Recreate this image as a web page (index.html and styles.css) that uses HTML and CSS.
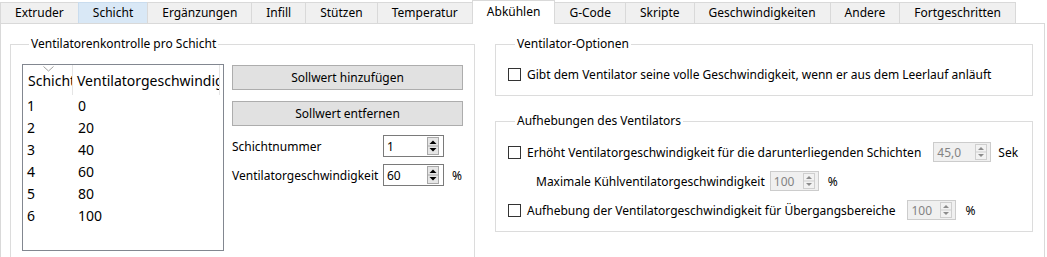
FILE: index.html
```html
<!DOCTYPE html>
<html lang="de">
<head>
<meta charset="utf-8">
<title>Abkühlen</title>
<link rel="stylesheet" href="styles.css">
</head>
<body>
<div class="window">
  <div class="tabbar">
    <div class="tab">Extruder</div>
    <div class="tab hover">Schicht</div>
    <div class="tab">Ergänzungen</div>
    <div class="tab">Infill</div>
    <div class="tab">Stützen</div>
    <div class="tab">Temperatur</div>
    <div class="tab active">Abkühlen</div>
    <div class="tab">G-Code</div>
    <div class="tab">Skripte</div>
    <div class="tab">Geschwindigkeiten</div>
    <div class="tab">Andere</div>
    <div class="tab">Fortgeschritten</div>
  </div>
  <div class="pane">
    <fieldset class="group left-group">
      <legend>Ventilatorenkontrolle pro Schicht</legend>
      <div class="lg-body">
        <div class="list">
          <svg class="sort" width="11" height="6" viewBox="0 0 11 6"><polyline points="0.5,0.5 5.5,5 10.5,0.5" fill="none" stroke="#a0a0a0" stroke-width="1"/></svg>
          <div class="thead">
            <div class="th c1">Schicht</div>
            <div class="th c2">Ventilatorgeschwindigkeit</div>
          </div>
          <div class="row"><span class="c1">1</span><span class="c2">0</span></div>
          <div class="row"><span class="c1">2</span><span class="c2">20</span></div>
          <div class="row"><span class="c1">3</span><span class="c2">40</span></div>
          <div class="row"><span class="c1">4</span><span class="c2">60</span></div>
          <div class="row"><span class="c1">5</span><span class="c2">80</span></div>
          <div class="row"><span class="c1">6</span><span class="c2">100</span></div>
        </div>
        <div class="controls">
          <div class="btn">Sollwert hinzufügen</div>
          <div class="btn">Sollwert entfernen</div>
          <div class="form">
            <span class="lbl">Schichtnummer</span>
            <div class="spin">
              <span class="val">1</span>
              <svg class="arrows" width="12" height="18" viewBox="0 0 12 18"><rect x="0.5" y="0.5" width="11" height="17" fill="#e6e6e6" stroke="#a8a8a8"/><line x1="0" y1="9" x2="12" y2="9" stroke="#a8a8a8"/><path d="M2.5 7 L6 3.5 L9.5 7 Z" fill="#000"/><path d="M2.5 11 L6 14.5 L9.5 11 Z" fill="#000"/></svg>
            </div>
            <span></span>
            <span class="lbl">Ventilatorgeschwindigkeit</span>
            <div class="spin">
              <span class="val">60</span>
              <svg class="arrows" width="12" height="18" viewBox="0 0 12 18"><rect x="0.5" y="0.5" width="11" height="17" fill="#e6e6e6" stroke="#a8a8a8"/><line x1="0" y1="9" x2="12" y2="9" stroke="#a8a8a8"/><path d="M2.5 7 L6 3.5 L9.5 7 Z" fill="#000"/><path d="M2.5 11 L6 14.5 L9.5 11 Z" fill="#000"/></svg>
            </div>
            <span class="unit">%</span>
          </div>
        </div>
      </div>
    </fieldset>
    <div class="right-col">
      <fieldset class="group opt-group">
        <legend>Ventilator-Optionen</legend>
        <div class="opt-row">
          <span class="check"></span>
          <span>Gibt dem Ventilator seine volle Geschwindigkeit, wenn er aus dem Leerlauf anläuft</span>
        </div>
      </fieldset>
      <fieldset class="group over-group">
        <legend>Aufhebungen des Ventilators</legend>
        <div class="opt-row">
          <span class="check"></span>
          <span>Erhöht Ventilatorgeschwindigkeit für die darunterliegenden Schichten</span>
          <div class="spin disabled wide gap-l">
            <span class="val">45,0</span>
            <svg class="arrows" width="12" height="16" viewBox="0 0 12 16"><rect x="0.5" y="0.5" width="11" height="15" fill="#f2f2f2" stroke="#cfcfcf"/><line x1="0" y1="8" x2="12" y2="8" stroke="#cfcfcf"/><path d="M3 6 L6 3 L9 6 Z" fill="#8c8c8c"/><path d="M3 10 L6 13 L9 10 Z" fill="#8c8c8c"/></svg>
          </div>
          <span class="unit-sek">Sek</span>
        </div>
        <div class="opt-row indent">
          <span>Maximale Kühlventilatorgeschwindigkeit</span>
          <div class="spin disabled gap-s">
            <span class="val">100</span>
            <svg class="arrows" width="12" height="16" viewBox="0 0 12 16"><rect x="0.5" y="0.5" width="11" height="15" fill="#f2f2f2" stroke="#cfcfcf"/><line x1="0" y1="8" x2="12" y2="8" stroke="#cfcfcf"/><path d="M3 6 L6 3 L9 6 Z" fill="#8c8c8c"/><path d="M3 10 L6 13 L9 10 Z" fill="#8c8c8c"/></svg>
          </div>
          <span class="unit-pct">%</span>
        </div>
        <div class="opt-row">
          <span class="check"></span>
          <span>Aufhebung der Ventilatorgeschwindigkeit für Übergangsbereiche</span>
          <div class="spin disabled gap-l">
            <span class="val">100</span>
            <svg class="arrows" width="12" height="16" viewBox="0 0 12 16"><rect x="0.5" y="0.5" width="11" height="15" fill="#f2f2f2" stroke="#cfcfcf"/><line x1="0" y1="8" x2="12" y2="8" stroke="#cfcfcf"/><path d="M3 6 L6 3 L9 6 Z" fill="#8c8c8c"/><path d="M3 10 L6 13 L9 10 Z" fill="#8c8c8c"/></svg>
          </div>
          <span class="unit-pct">%</span>
        </div>
      </fieldset>
    </div>
  </div>
</div>
</body>
</html>
```
FILE: styles.css
```css
* { box-sizing: border-box; }

body {
  margin: 0;
  background: #ffffff;
  font-family: "Noto Sans", "Liberation Sans", sans-serif;
  font-size: 12px;
  color: #000000;
}

.window {
  width: 1047px;
  height: 257px;
  overflow: hidden;
}

/* ---------- tabs ---------- */
.tabbar {
  display: flex;
  align-items: flex-end;
  height: 23px;
}

.tab {
  height: 21px;
  padding: 0 14px;
  line-height: 19px;
  background: #f0f0f0;
  border: 1px solid #d9d9d9;
  border-bottom: none;
  margin-left: -1px;
  white-space: nowrap;
}

.tab:first-child { margin-left: 0; }

.tab.hover {
  background: #d9e8f6;
  border-color: #c9dcee;
}

.tab.active {
  position: relative;
  z-index: 2;
  height: 24px;
  margin-bottom: -1px;
  background: #ffffff;
  line-height: 22px;
}

/* ---------- pane ---------- */
.pane {
  width: 1045px;
  height: 250px;
  border: 1px solid #d9d9d9;
  padding: 12px 11px 0 9px;
  display: flex;
  gap: 20px;
  align-items: flex-start;
}

.group {
  margin: 0;
  min-width: 0;
  border: 1px solid #dcdcdc;
}

.group legend {
  margin-left: 7px;
  padding: 0 2px;
  line-height: 16px;
}

/* ---------- left group ---------- */
.left-group {
  width: 465px;
  height: 240px;
  padding: 12px 0 0 11px;
}

.lg-body {
  display: flex;
  gap: 8px;
  align-items: flex-start;
}

.list {
  position: relative;
  width: 202px;
  height: 187px;
  border: 1px solid #828790;
  background: #ffffff;
  font-size: 14px;
  overflow: hidden;
}

.sort {
  position: absolute;
  left: 20px;
  top: 1px;
}

.thead {
  display: flex;
  height: 30px;
}

.th {
  padding-top: 5px;
  line-height: 22px;
  white-space: nowrap;
  overflow: hidden;
  border-right: 1px solid #e5e5e5;
}

.th.c1 {
  width: 50px;
  padding-left: 5px;
}

.th.c2 {
  width: 147px;
  padding-left: 4px;
}

.row {
  display: flex;
  height: 22px;
  line-height: 22px;
}

.row .c1 {
  width: 50px;
  padding-left: 4px;
}

.row .c2 {
  padding-left: 5px;
}

.controls {
  width: 231px;
  display: flex;
  flex-direction: column;
  padding-top: 1px;
}

.btn {
  height: 25px;
  line-height: 23px;
  text-align: center;
  background: #e1e1e1;
  border: 1px solid #adadad;
}

.btn + .btn { margin-top: 11px; }

.form {
  margin-top: 9px;
  display: grid;
  grid-template-columns: 151px 61px auto;
  row-gap: 7px;
  align-items: center;
}

.unit { margin-left: 8px; }

.spin {
  height: 22px;
  border: 1px solid #7a7a7a;
  background: #ffffff;
  display: flex;
  align-items: center;
  justify-content: space-between;
  padding: 0 4px 0 3px;
}

.spin .arrows { display: block; }

.spin.disabled {
  width: 49px;
  height: 20px;
  border-color: #cccccc;
  background: #f0f0f0;
  color: #838383;
  padding-right: 3px;
}

.spin.disabled.wide { width: 58px; }

/* ---------- right column ---------- */
.right-col {
  width: 538px;
  display: flex;
  flex-direction: column;
}

.opt-group {
  padding: 12px 0 11px 12px;
}

.over-group {
  margin-top: 17px;
  padding: 13px 0 11px 12px;
  display: flex;
  flex-direction: column;
  gap: 9px;
}

.opt-row {
  display: flex;
  align-items: center;
  height: 20px;
  white-space: nowrap;
}

.opt-row.indent { padding-left: 28px; }

.check {
  width: 13px;
  height: 13px;
  border: 1px solid #333333;
  background: #ffffff;
  margin-right: 6px;
  flex: none;
}

.gap-l { margin-left: 12px; }
.gap-s { margin-left: 5px; }
.unit-sek { margin-left: 7px; }
.unit-pct { margin-left: 9px; }
```
